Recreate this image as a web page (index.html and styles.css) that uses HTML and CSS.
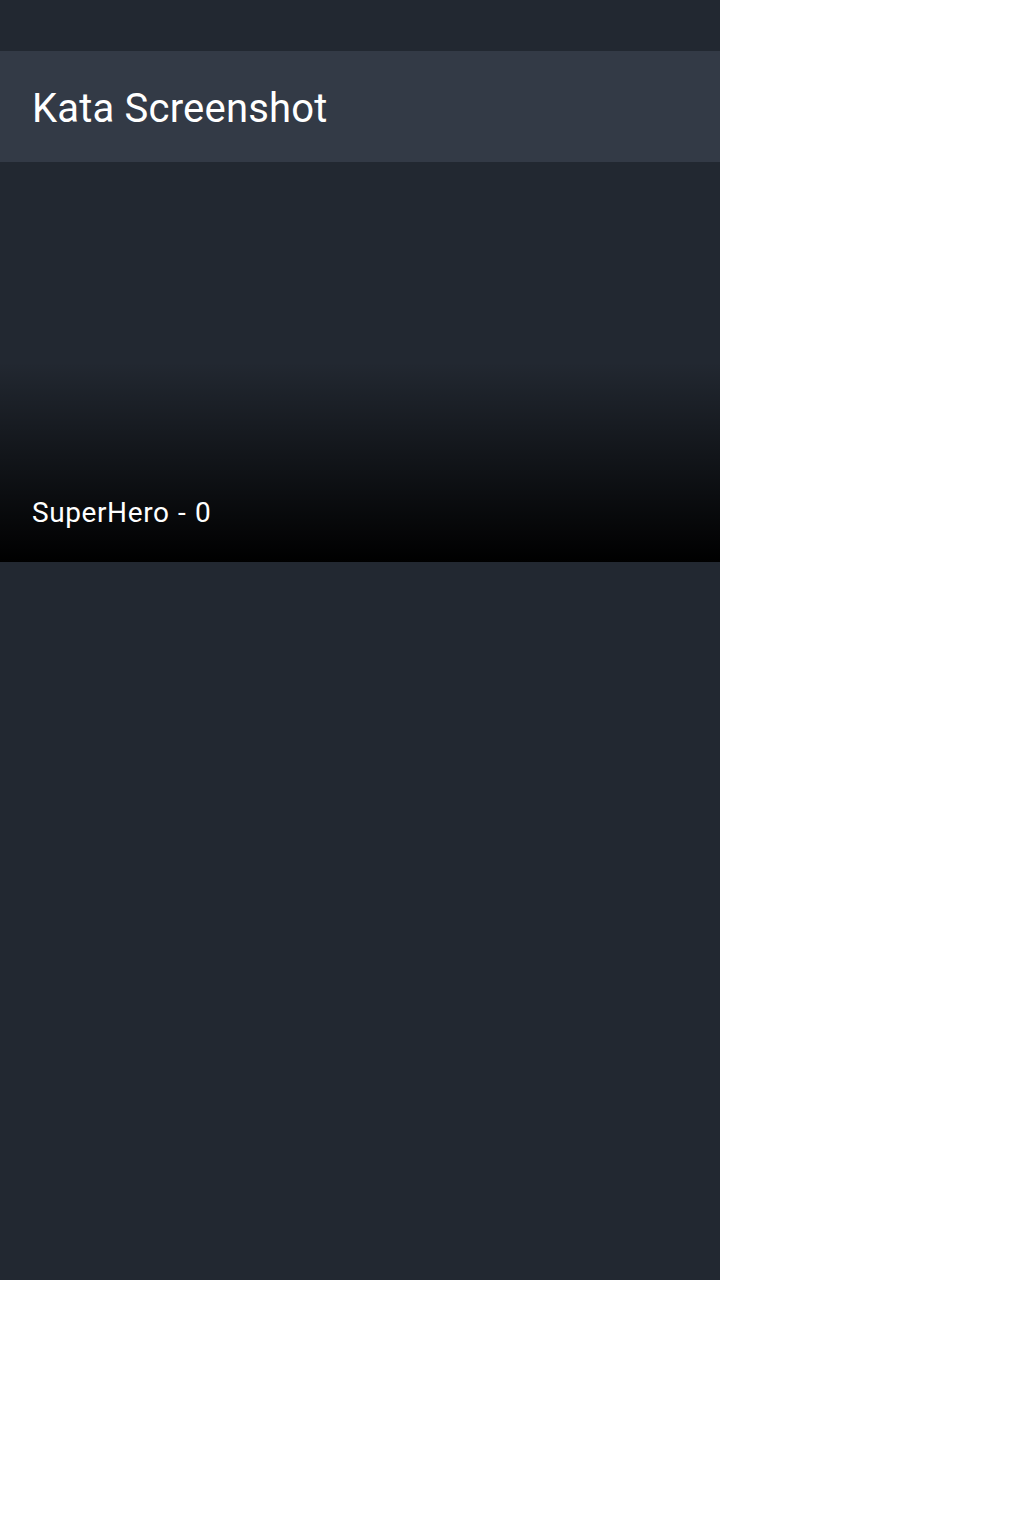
FILE: index.html
```html
<!DOCTYPE html>
<html>
<head>
<meta charset="utf-8">
<link rel="stylesheet" href="styles.css">
</head>
<body>
<div class="screen">
  <div class="status-bar"></div>
  <div class="toolbar"><span class="title">Kata Screenshot</span></div>
  <div class="hero-card">
    <div class="hero-shade"></div>
    <span class="hero-name">SuperHero - 0</span>
  </div>
</div>
</body>
</html>
```
FILE: styles.css
```css
html, body {
  margin: 0;
  padding: 0;
  background: #ffffff;
}
.screen {
  width: 720px;
  height: 1280px;
  background: #222831;
  display: flex;
  flex-direction: column;
  font-family: Roboto, "Liberation Sans", sans-serif;
}
.status-bar {
  height: 51px;
  background: #222831;
}
.toolbar {
  height: 111px;
  background: #333a46;
  display: flex;
  align-items: center;
  padding-left: 32px;
}
.title {
  color: #ffffff;
  font-size: 40px;
  line-height: 1;
  padding-top: 4px;
  letter-spacing: 0.2px;
}
.hero-card {
  position: relative;
  height: 400px;
  display: flex;
  align-items: flex-end;
  padding: 0 32px 35px;
  box-sizing: border-box;
}
.hero-shade {
  position: absolute;
  left: 0;
  right: 0;
  bottom: 0;
  height: 200px;
  background: linear-gradient(to bottom, rgba(0,0,0,0) 0%, rgba(0,0,0,0.5) 50%, #000000 100%);
}
.hero-name {
  position: relative;
  color: #ffffff;
  font-size: 28px;
  line-height: 1;
  letter-spacing: 0.6px;
  word-spacing: 1px;
}
```
